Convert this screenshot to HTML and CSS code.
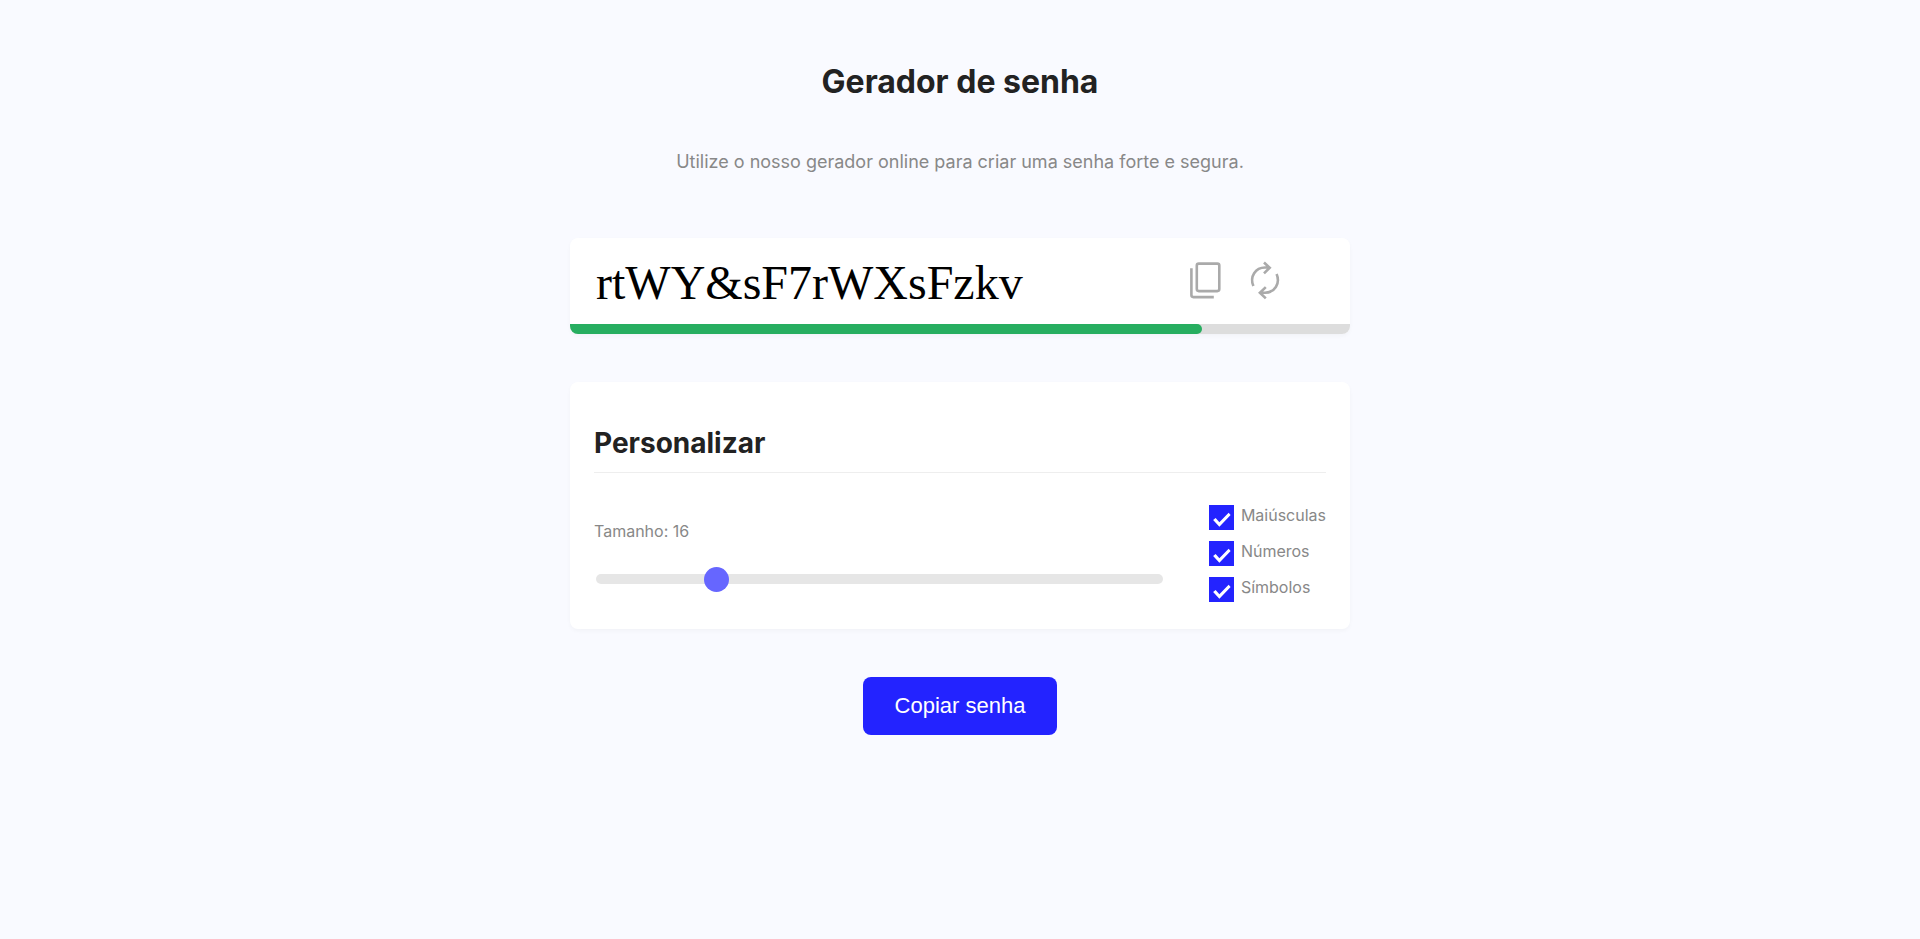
FILE: index.html
```html
<!DOCTYPE html>
<html lang="pt-BR">
<head>
  <meta charset="UTF-8">
  <meta name="viewport" content="width=device-width, initial-scale=1">
  <title>Gerador de senha</title>
  <link rel="stylesheet" href="styles.css">
</head>
<body>
  <main class="container">
    <h1 class="title">Gerador de senha</h1>
    <p class="subtitle">Utilize o nosso gerador online para criar uma senha forte e segura.</p>

    <section class="card password">
      <div class="password-row">
        <input class="password-text" type="text" value="rtWY&amp;sF7rWXsFzkv" aria-label="Senha gerada" readonly>
        <div class="actions">
          <button class="icon-button" type="button" aria-label="Copiar">
            <svg width="40" height="40" viewBox="0 0 40 40" fill="none" stroke="#aaa" stroke-width="2.6">
              <rect x="10.800" y="2.600" width="22.500" height="27.500" rx="2"/>
              <path d="M5.400 7.300V34.100Q5.400 36.100 7.400 36.100H27.800"/>
            </svg>
          </button>
          <button class="icon-button" type="button" aria-label="Gerar nova senha">
            <svg width="40" height="40" viewBox="0 0 40 40" fill="none" stroke="#aaa" stroke-width="2.6">
              <path d="M7.400 25.100C3.400 15.600 9.500 6.500 19 6.500H23.500M18 1.500 23.700 6.800 18 12.400"/>
              <path d="M30.600 13.100C34.600 22.600 28.500 31.800 19 31.800H14.500M19.800 26.100 13.900 31.800 19.800 37.400"/>
            </svg>
          </button>
        </div>
      </div>
      <div class="strength"><div class="strength-bar" style="width: 81%"></div></div>
    </section>

    <section class="card options">
      <h2 class="options-title">Personalizar</h2>
      <div class="options-row">
        <div class="size">
          <label class="label" for="size">Tamanho: 16</label>
          <input class="slider" id="size" type="range" min="4" max="64" value="16">
        </div>
        <div class="checks">
          <label class="check label"><input class="checkbox" type="checkbox" checked>Maiúsculas</label>
          <label class="check label"><input class="checkbox" type="checkbox" checked>Números</label>
          <label class="check label"><input class="checkbox" type="checkbox" checked>Símbolos</label>
        </div>
      </div>
    </section>

    <button class="submit" type="button">Copiar senha</button>
  </main>
</body>
</html>
```
FILE: styles.css
```css
* {
  box-sizing: border-box;
}

body {
  margin: 0;
  background: #f9faff;
  color: #222;
  font-family: Inter, "Liberation Sans", sans-serif;
}

.container {
  display: flex;
  flex-direction: column;
  align-items: center;
  max-width: 828px;
  margin: 0 auto;
  padding: 62px 24px;
}

.title {
  margin: 0 0 48px;
  font-size: 32px;
  line-height: 40px;
  font-weight: 700;
}

.subtitle {
  margin: 0 0 64px;
  color: #888;
  font-size: 18px;
  line-height: 24px;
  text-align: center;
}

.card {
  width: 100%;
  margin-bottom: 48px;
  border-radius: 8px;
  background: #fff;
  box-shadow: 0 2px 4px rgba(0, 0, 0, 0.03);
}

.password {
  overflow: hidden;
}

.password-row {
  display: flex;
  align-items: center;
  justify-content: space-between;
  padding: 15px 64px 15px 24px;
}

.password-text {
  flex: 1;
  min-width: 0;
  height: 56px;
  padding: 2px 2px 0;
  border: 0;
  outline: 0;
  background: transparent;
  color: #000;
  font-family: "Liberation Serif", serif;
  font-size: 48px;
}

.actions {
  display: flex;
  gap: 20px;
}

.icon-button {
  display: flex;
  padding: 0;
  border: 0;
  background: none;
  cursor: pointer;
}

.strength {
  height: 10px;
  background: #ddd;
}

.strength-bar {
  height: 10px;
  border-radius: 0 5px 5px 0;
  background: #27ae60;
}

.options {
  padding: 44px 24px 24px;
}

.options-title {
  margin: 0 0 32px;
  padding-bottom: 12px;
  border-bottom: 1px solid #eee;
  font-size: 28px;
  line-height: 34px;
  font-weight: 700;
}

.options-row {
  display: flex;
  gap: 44px;
}

.label {
  color: #888;
  font-size: 16px;
  line-height: 20px;
}

.size {
  display: flex;
  flex: 1;
  flex-direction: column;
  gap: 25px;
  padding-top: 16px;
}

.slider {
  height: 25px;
  margin: 0 2px;
  appearance: none;
  background: none;
}

.slider::-webkit-slider-runnable-track {
  height: 10px;
  border-radius: 5px;
  background: #e6e6e6;
}

.slider::-webkit-slider-thumb {
  width: 25px;
  height: 25px;
  margin-top: -7px;
  appearance: none;
  border-radius: 50%;
  background: #6666ff;
}

.checks {
  display: flex;
  flex: 0 0 116px;
  flex-direction: column;
  gap: 8px;
}

.check {
  display: flex;
  align-items: flex-start;
  gap: 7px;
  height: 28px;
  white-space: nowrap;
}

.checkbox {
  flex: none;
  width: 25px;
  height: 25px;
  margin: 0;
  appearance: none;
  background: #ddd;
}

.checkbox:checked {
  background: #2323ff;
}

.checkbox:checked::before {
  content: "";
  display: block;
  height: 25px;
  background: #fff;
  clip-path: polygon(17% 60%, 27% 52%, 42% 69%, 79% 31%, 87% 40%, 42% 87%);
}

.submit {
  padding: 16px 32px;
  border: 0;
  border-radius: 8px;
  background: #2323ff;
  color: #fff;
  font-family: "Liberation Sans", Arial, sans-serif;
  font-size: 22px;
  line-height: 26px;
  cursor: pointer;
}
```
